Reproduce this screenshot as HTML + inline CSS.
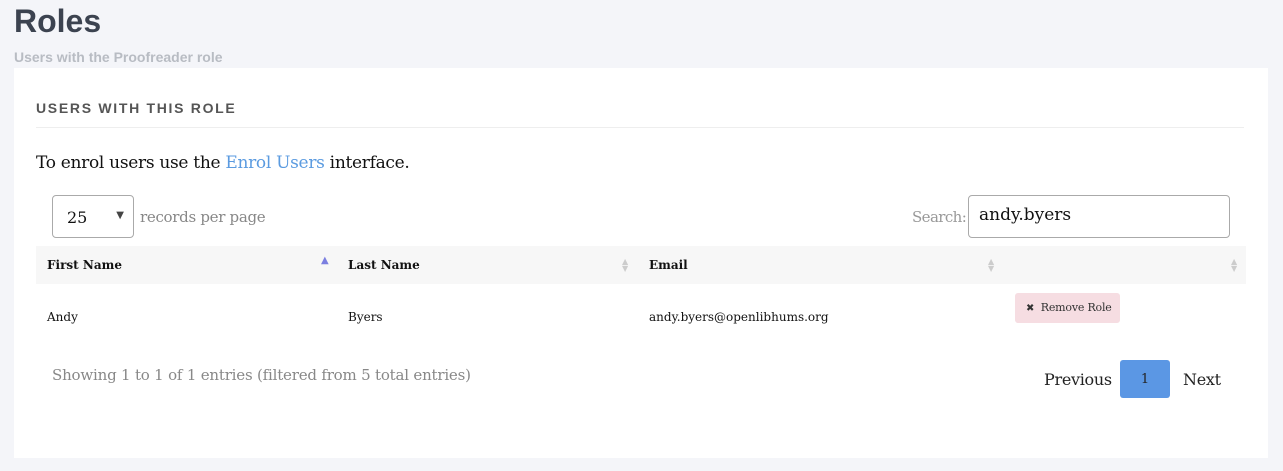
<!DOCTYPE html>
<html><head><meta charset="utf-8"><style>
*{box-sizing:border-box;margin:0;padding:0}
body{width:1283px;height:471px;background:#f4f5f9;font-family:"DejaVu Serif",serif;position:relative;overflow:hidden;color:#111}
.abs{position:absolute;white-space:nowrap}
h1{position:absolute;left:14px;top:3px;font:bold 32px "Liberation Sans",sans-serif;color:#3c4350}
.sub{left:14px;top:49px;font:bold 14px "Liberation Sans",sans-serif;color:#b8bcc3}
.card{position:absolute;left:14px;top:68px;width:1254px;height:390px;background:#fff}
.ttl{left:36px;top:100px;font:bold 14px "Liberation Sans",sans-serif;letter-spacing:1.7px;color:#555}
.hr{position:absolute;left:36px;top:127px;width:1208px;height:1px;background:#eee}
.intro{left:36px;top:153px;font-size:17px;letter-spacing:-0.3px}
.intro a{color:#5b9be0;text-decoration:none}
.sel{position:absolute;left:52px;top:195px;width:82px;height:43px;border:1px solid #aaa;border-radius:4px;font-size:16px;padding:12px 0 0 14px}
.sel span{position:absolute;right:9px;top:14px;font-size:10px;color:#444}
.rpp{left:140px;top:208px;font-size:15px;color:#888;letter-spacing:-0.3px}
.slab{left:912px;top:208px;font-size:15px;color:#999;letter-spacing:-0.6px}
.search{position:absolute;left:968px;top:195px;width:262px;height:43px;border:1px solid #aaa;border-radius:4px;font-size:17px;padding:9px 0 0 10px}
.thead{position:absolute;left:36px;top:246px;width:1210px;height:38px;background:#f7f7f7}
.th{top:258px;font-size:12px;font-weight:bold}
.td{top:310px;font-size:12px}
.sort{position:absolute;top:258px;font-size:8px;line-height:7px;color:#ccc}
.btn{position:absolute;left:1015px;top:293px;width:105px;height:30px;background:#f6dde2;border-radius:3px;font-size:11px;padding:8px 0 0 11px;color:#333;letter-spacing:-0.2px}
.info{left:52px;top:366px;font-size:15px;color:#888;letter-spacing:-0.2px}
.pg{top:370px;font-size:16px;color:#222;letter-spacing:-0.3px}
.cur{position:absolute;left:1120px;top:360px;width:50px;height:38px;background:#5b97e4;border-radius:3px;font-size:13px;text-align:center;padding-top:12px;color:#222}
</style></head><body>
<h1>Roles</h1>
<div class="abs sub">Users with the Proofreader role</div>
<div class="card"></div>
<div class="abs ttl">USERS WITH THIS ROLE</div>
<div class="hr"></div>
<div class="abs intro">To enrol users use the <a>Enrol Users</a> interface.</div>
<div class="sel">25<span>▼</span></div>
<div class="abs rpp">records per page</div>
<div class="abs slab">Search:</div>
<div class="search">andy.byers</div>
<div class="thead"></div>
<div class="abs th" style="left:47px">First Name</div>
<div class="abs th" style="left:348px">Last Name</div>
<div class="abs th" style="left:649px">Email</div>
<div class="sort" style="left:321px;top:257px;font-size:10px;color:#7b7fe0">▲</div>
<div class="sort" style="left:622px">▲<br>▼</div>
<div class="sort" style="left:988px">▲<br>▼</div>
<div class="sort" style="left:1231px">▲<br>▼</div>
<div class="abs td" style="left:47px">Andy</div>
<div class="abs td" style="left:348px">Byers</div>
<div class="abs td" style="left:649px">andy.byers@openlibhums.org</div>
<div class="btn"><b style="font-family:'DejaVu Sans';font-size:10px">✖</b>&nbsp; Remove Role</div>
<div class="abs info">Showing 1 to 1 of 1 entries (filtered from 5 total entries)</div>
<div class="abs pg" style="left:1044px">Previous</div>
<div class="cur">1</div>
<div class="abs pg" style="left:1183px">Next</div>
</body></html>
